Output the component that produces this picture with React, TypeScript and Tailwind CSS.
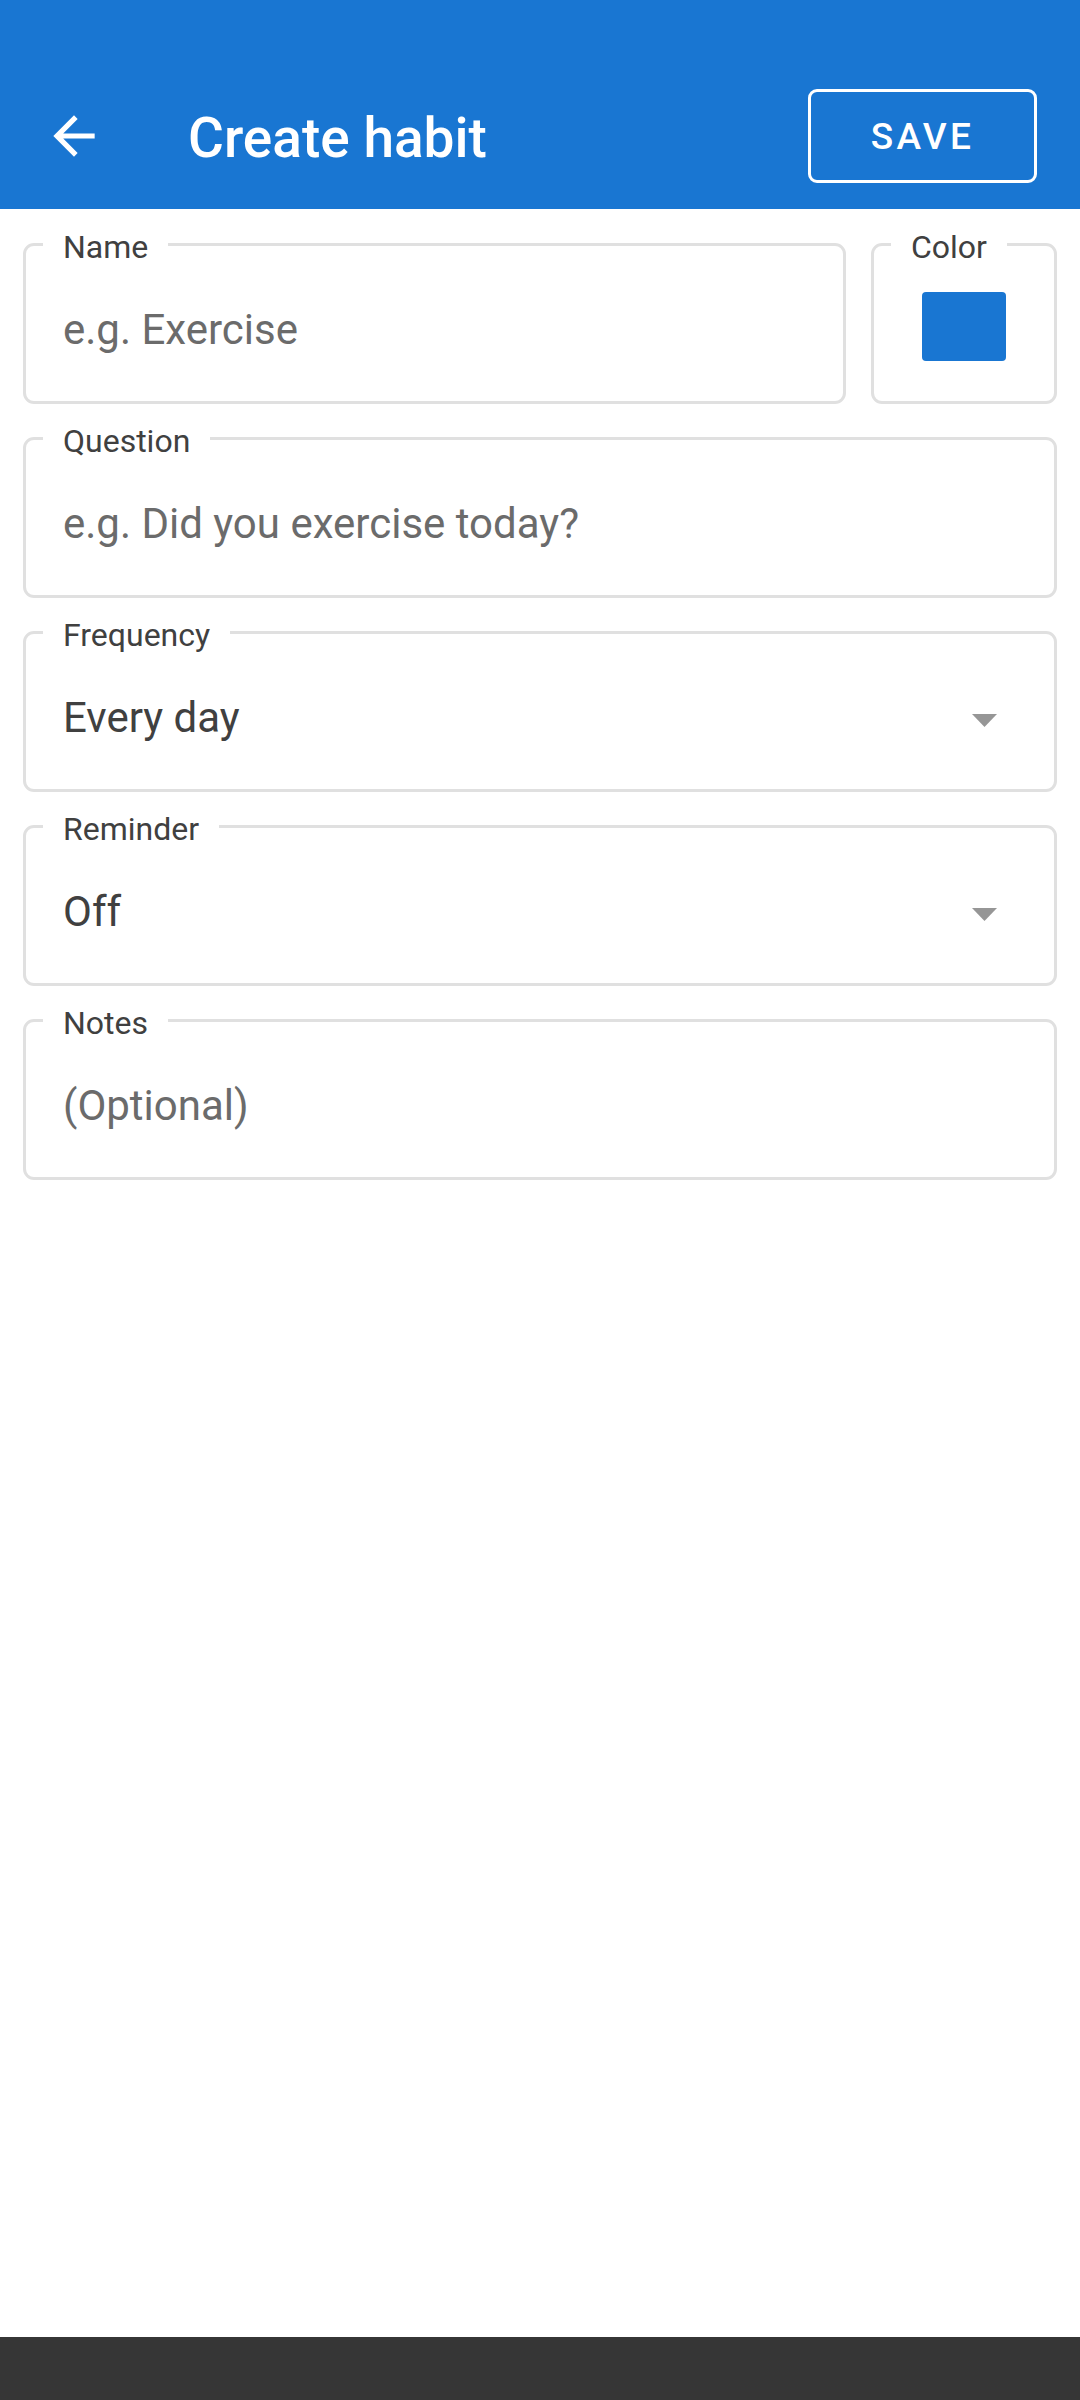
import React from 'react';

const font = { fontFamily: 'Roboto, "Liberation Sans", sans-serif' };

interface FieldProps {
	label: string;
	children: React.ReactNode;
	className?: string;
}

const Field: React.FC<FieldProps> = ({ label, children, className = '' }) => (
	<div className={`relative h-[161px] rounded-[11px] border-[3px] border-[#e0e0e0] ${className}`}>
		<span className="absolute -top-[18px] left-[17px] bg-white px-[20px] text-[32px] leading-[38px] text-[#404040]">
			{label}
		</span>
		{children}
	</div>
);

const Caret = () => (
	<svg width="25" height="13" viewBox="0 0 25 13" className="mt-[4px] shrink-0">
		<polygon points="0,0 25,0 12.5,13" fill="#969696" />
	</svg>
);

export default function App() {
	return (
		<div className="flex min-h-screen flex-col bg-white" style={font}>
			<header className="h-[209px] bg-[#1976d2] pt-[89px]">
				<div className="flex h-[94px] items-center">
					<svg width="62" height="62" viewBox="0 0 24 24" className="ml-[43px] shrink-0" fill="white">
						<path d="M20 11H7.83l5.59-5.59L12 4l-8 8 8 8 1.41-1.41L7.83 13H20v-2z" />
					</svg>
					<h1 className="mt-[4px] ml-[83px] text-[55px] leading-none font-medium text-white">Create habit</h1>
					<button className="mr-[43px] ml-auto flex h-[94px] w-[229px] items-center justify-center rounded-[9px] border-[3px] border-white pt-[2px] text-[37px] font-medium tracking-[0.09em] text-white">
						SAVE
					</button>
				</div>
			</header>

			<main className="flex flex-1 flex-col gap-[33px] px-[23px] pt-[34px]">
				<div className="flex gap-[25px]">
					<Field label="Name" className="flex-1">
						<p className="pt-[60px] pl-[37px] text-[42px] leading-[48px] text-[#6b6b6b]">e.g. Exercise</p>
					</Field>
					<Field label="Color" className="w-[186px] shrink-0">
						<div className="flex h-full items-center justify-center pt-[6px]">
							<div className="h-[69px] w-[84px] rounded-[4px] bg-[#1976d2]" />
						</div>
					</Field>
				</div>

				<Field label="Question">
					<p className="pt-[60px] pl-[37px] text-[42px] leading-[48px] text-[#6b6b6b]">e.g. Did you exercise today?</p>
				</Field>

				<Field label="Frequency">
					<div className="flex items-center justify-between pt-[60px] pr-[57px] pl-[37px]">
						<span className="text-[42px] leading-[48px] text-[#404040]">Every day</span>
						<Caret />
					</div>
				</Field>

				<Field label="Reminder">
					<div className="flex items-center justify-between pt-[60px] pr-[57px] pl-[37px]">
						<span className="text-[42px] leading-[48px] text-[#404040]">Off</span>
						<Caret />
					</div>
				</Field>

				<Field label="Notes">
					<p className="pt-[60px] pl-[37px] text-[42px] leading-[48px] text-[#6b6b6b]">(Optional)</p>
				</Field>
			</main>

			<div className="h-[63px] bg-[#363636]" />
		</div>
	);
}
